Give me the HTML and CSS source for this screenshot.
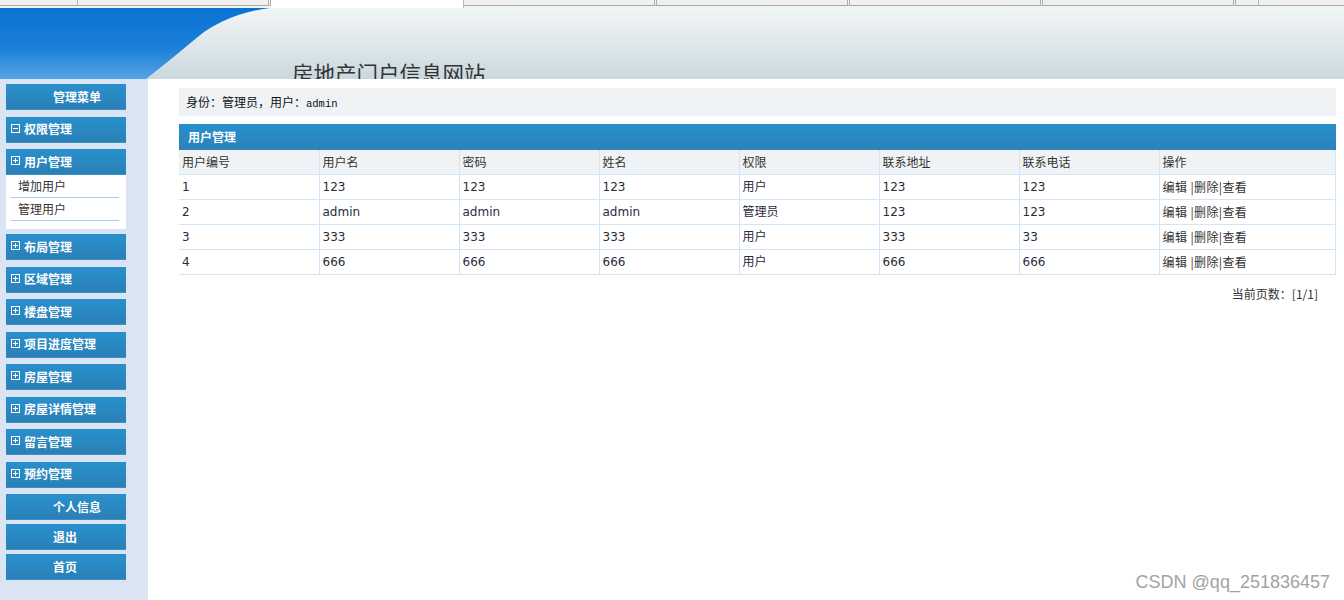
FILE: index.html
```html
<!DOCTYPE html>
<html lang="zh">
<head>
<meta charset="utf-8">
<title>房地产门户信息网站</title>
<link rel="stylesheet" href="styles.css">
</head>
<body>
<div class="tabs">
  <span class="tab t1"></span>
  <span class="tab t2"></span>
  <span class="tab active"></span>
  <span class="tab t3"></span>
  <span class="tab t3"></span>
  <span class="tab t3"></span>
  <span class="tab t3"></span>
  <span class="tab t4"></span>
  <span class="tab rest"></span>
</div>
<header class="banner">
  <svg class="wave" width="280" height="71" viewBox="0 0 280 71">
    <defs>
      <linearGradient id="bl" x1="0" y1="0" x2="0" y2="1">
        <stop offset="0" stop-color="#0a72d2"/>
        <stop offset="0.55" stop-color="#197fd8"/>
        <stop offset="1" stop-color="#56a2e6"/>
      </linearGradient>
    </defs>
    <path d="M0 0 H270 C 238 4, 214 16, 199 28 C 182 42, 165 56, 146 71 H0 Z" fill="url(#bl)"/>
  </svg>
  <h1 class="title">房地产门户信息网站</h1>
</header>
<div class="main">
  <aside class="side">
    <div class="btn center">管理菜单</div>
    <div class="btn group"><span class="ico minus"></span>权限管理</div>
    <div class="btn group tight"><span class="ico plus"></span>用户管理</div>
    <div class="sub">
      <div class="sub-item">增加用户</div>
      <div class="sub-item">管理用户</div>
    </div>
    <div class="btn group after-sub"><span class="ico plus"></span>布局管理</div>
    <div class="btn group"><span class="ico plus"></span>区域管理</div>
    <div class="btn group"><span class="ico plus"></span>楼盘管理</div>
    <div class="btn group"><span class="ico plus"></span>项目进度管理</div>
    <div class="btn group"><span class="ico plus"></span>房屋管理</div>
    <div class="btn group"><span class="ico plus"></span>房屋详情管理</div>
    <div class="btn group"><span class="ico plus"></span>留言管理</div>
    <div class="btn group"><span class="ico plus"></span>预约管理</div>
    <div class="btn center">个人信息</div>
    <div class="btn center small-gap">退出</div>
    <div class="btn center small-gap">首页</div>
  </aside>
  <main class="content">
    <div class="info">身份：管理员，用户：<span class="mono">admin</span></div>
    <div class="panel-title">用户管理</div>
    <table class="grid">
      <colgroup>
        <col class="c"><col class="c"><col class="c"><col class="c"><col class="c"><col class="c"><col class="c"><col>
      </colgroup>
      <thead>
        <tr><th>用户编号</th><th>用户名</th><th>密码</th><th>姓名</th><th>权限</th><th>联系地址</th><th>联系电话</th><th>操作</th></tr>
      </thead>
      <tbody>
        <tr><td>1</td><td>123</td><td>123</td><td>123</td><td>用户</td><td>123</td><td>123</td><td class="ops">编辑 |删除|查看</td></tr>
        <tr><td>2</td><td>admin</td><td>admin</td><td>admin</td><td>管理员</td><td>123</td><td>123</td><td class="ops">编辑 |删除|查看</td></tr>
        <tr><td>3</td><td>333</td><td>333</td><td>333</td><td>用户</td><td>333</td><td>33</td><td class="ops">编辑 |删除|查看</td></tr>
        <tr><td>4</td><td>666</td><td>666</td><td>666</td><td>用户</td><td>666</td><td>666</td><td class="ops">编辑 |删除|查看</td></tr>
      </tbody>
    </table>
    <div class="pager">当前页数：[1/1]</div>
  </main>
</div>
<div class="watermark">CSDN @qq_251836457</div>
</body>
</html>
```
FILE: styles.css
```css
html, body {
  margin: 0;
  padding: 0;
  background: #ffffff;
  height: 600px;
  overflow: hidden;
  font-family: "DejaVu Sans", "Noto Sans CJK SC", sans-serif;
  color: #333;
}

.tabs {
  display: flex;
  height: 8px;
  background: #f0f4f4;
}
.tab {
  height: 5px;
  background: #f0f0f0;
  border-bottom: 1px solid #a8a8a8;
  border-right: 1px solid #b8b8b8;
  box-sizing: content-box;
}
.t1 { width: 77px; }
.t2 { width: 190px; border-right: 3px double #b0b0b0; }
.active {
  width: 192px;
  height: 8px;
  background: #ffffff;
  border-bottom: none;
  border-right: 1px solid #b8b8b8;
}
.t3 { width: 190px; border-right: 3px double #b0b0b0; }
.t4 { width: 22px; }
.rest { flex: 1; border-right: none; }

.banner {
  position: relative;
  height: 71px;
  background: linear-gradient(#f1f5f5, #e2e9eb 45%, #c9d8df);
  overflow: hidden;
}
.wave {
  position: absolute;
  left: 0;
  top: 0;
  display: block;
}
.title {
  position: absolute;
  left: 292px;
  top: 50px;
  margin: 0;
  font-family: "Noto Sans CJK SC", sans-serif;
  font-weight: normal;
  font-size: 21.5px;
  line-height: 30px;
  color: #333;
  letter-spacing: 0;
}

.main {
  display: flex;
  height: 521px;
}
.side {
  width: 148px;
  flex: none;
  background: #dae4f2;
  box-sizing: border-box;
  padding: 5px 0 0 6px;
}
.btn {
  width: 120px;
  height: 26px;
  box-sizing: border-box;
  background: linear-gradient(#2990cd, #2a80b6);
  color: #ffffff;
  font-family: "Noto Sans CJK SC", sans-serif;
  font-weight: bold;
  font-size: 12px;
  line-height: 26px;
  margin-bottom: 6.5px;
  display: flex;
  align-items: center;
  border-bottom: 1px solid #3d8fc4;
}
.btn.center { padding-left: 47px; }
.btn.group { padding-left: 5px; }
.btn.tight { margin-bottom: 0; }
.btn.small-gap { margin-top: -2.5px; }
.after-sub { margin-top: -1.5px; }

.ico {
  width: 7px;
  height: 7px;
  border: 1px solid #ffffff;
  margin-right: 4px;
  position: relative;
  flex: none;
  margin-top: -2px;
}
.ico::before {
  content: "";
  position: absolute;
  left: 1px;
  top: 3px;
  width: 5px;
  height: 1px;
  background: #ffffff;
}
.plus::after {
  content: "";
  position: absolute;
  left: 3px;
  top: 1px;
  width: 1px;
  height: 5px;
  background: #ffffff;
}

.sub {
  width: 120px;
  height: 54px;
  background: #ffffff;
  box-sizing: border-box;
  padding: 0 7px 0 5px;
  margin-bottom: 6.5px;
}
.sub-item {
  height: 22px;
  line-height: 22px;
  border-bottom: 1px solid #a7cfea;
  font-family: "Noto Sans CJK SC", sans-serif;
  font-size: 12px;
  color: #333;
  padding-left: 7px;
}

.content {
  flex: 1;
  padding: 9px 8px 0 31px;
  box-sizing: border-box;
  font-size: 12px;
}
.info {
  height: 28px;
  line-height: 28px;
  background: #eff3f6;
  padding-left: 7px;
  font-family: "Noto Sans CJK SC", sans-serif;
  font-size: 12px;
  color: #111;
}
.mono {
  font-family: "Liberation Mono", monospace;
  font-size: 10.5px;
}
.panel-title {
  margin-top: 8px;
  height: 26px;
  line-height: 26px;
  background: linear-gradient(#2890cc, #2a82b8);
  color: #ffffff;
  font-family: "Noto Sans CJK SC", sans-serif;
  font-weight: bold;
  font-size: 12px;
  padding-left: 9px;
}
.grid {
  width: 100%;
  border-collapse: collapse;
  table-layout: fixed;
}
.grid col.c { width: 140px; }
.grid th, .grid td {
  border: 1px solid #cfe5f8;
  border-top: none;
  text-align: left;
  font-weight: normal;
  padding: 0 0 0 3px;
  height: 24px;
  font-size: 12px;
  white-space: nowrap;
  overflow: hidden;
}
.grid th:first-child, .grid td:first-child { border-left: none; }
.grid th {
  background: #eff3f6;
  font-family: "Noto Sans CJK SC", sans-serif;
  color: #333;
  line-height: 24px;
}
.grid td {
  color: #2a2a3a;
  line-height: 24px;
}
.grid td.ops {
  font-family: "Noto Sans CJK SC", sans-serif;
  color: #333;
  letter-spacing: 0.4px;
}
.pager {
  text-align: right;
  padding-right: 18px;
  margin-top: 10px;
  font-family: "Noto Sans CJK SC", sans-serif;
  font-size: 12px;
  color: #333;
}

.watermark {
  position: absolute;
  right: 14px;
  bottom: 7px;
  font-family: "Liberation Sans", sans-serif;
  font-size: 18px;
  color: #a3a3a3;
}
```
